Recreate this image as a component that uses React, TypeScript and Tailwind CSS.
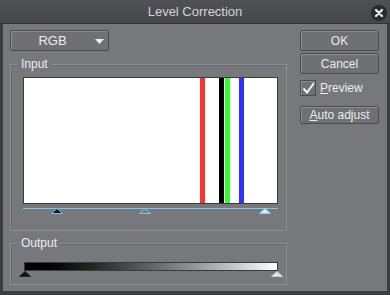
import React from 'react';

const font = { fontFamily: '"Liberation Sans", Arial, sans-serif' };

function Button({ label, u, h = 'h-[21px]' }: { label: string; u?: number; h?: string }) {
  return (
    <button className={`${h} w-[79px] rounded-[2px] border border-[#4a4b4e] bg-[#6f7073] text-[12px] leading-none text-[#ececec] shadow-[inset_1px_1px_0_#8e8f92]`}>
      {u === undefined ? label : (
        <>
          {label.slice(0, u)}
          <span className="underline">{label[u]}</span>
          {label.slice(u + 1)}
        </>
      )}
    </button>
  );
}

function Tri({ fill, stroke, w = 12, h = 6 }: { fill: string; stroke: string; w?: number; h?: number }) {
  return (
    <svg width={w} height={h} viewBox={`0 0 ${w} ${h}`} className="block">
      <polygon points={`${w / 2},0.5 ${w - 0.5},${h - 0.5} 0.5,${h - 0.5}`} fill={fill} stroke={stroke} strokeWidth="1" />
    </svg>
  );
}

function Group({ label, children, className }: { label: string; children: React.ReactNode; className: string }) {
  return (
    <div className={`relative border border-[#8f9093] shadow-[inset_1px_1px_0_#66676a] ${className}`}>
      <span className="absolute -top-[8px] left-[6px] bg-[#77787b] px-[4px] text-[12px] leading-[14px] text-[#ececec]">
        {label}
      </span>
      {children}
    </div>
  );
}

export default function App() {
  const lines = [
    { x: 177, c: 'bg-[#ff3030]' },
    { x: 196, c: 'bg-black' },
    { x: 202, c: 'bg-[#33ff33]' },
    { x: 216, c: 'bg-[#3030ff]' },
  ];
  return (
    <div className="flex h-[295px] w-[390px] flex-col bg-[#3c3d3f]" style={font}>
      <div className="relative flex h-[24px] items-center justify-center border-b border-[#333436] bg-gradient-to-b from-[#505154] to-[#46474a]">
        <span className="text-[13px] text-[#d4d4d4]">Level Correction</span>
        <div className="absolute right-[3px] top-[5px] flex h-[16px] w-[16px] items-center justify-center rounded-full bg-[#2a2a2c]">
          <svg width="10" height="10" viewBox="0 0 10 10">
            <path d="M2 2 L8 8 M8 2 L2 8" stroke="#e8e8e8" strokeWidth="2.4" strokeLinecap="round" />
          </svg>
        </div>
      </div>
      <div className="mx-[3px] mb-[4px] flex flex-1 bg-[#77787b] px-[7px] pt-[6px]">
        <div className="flex w-[277px] flex-col">
          <div className="relative flex h-[21px] w-[99px] items-center justify-center rounded-[2px] border border-[#4a4b4e] bg-[#6f7073] text-[13px] text-[#ececec] shadow-[inset_1px_1px_0_#8e8f92]">
            <span className="-ml-[14px]">RGB</span>
            <svg width="9" height="5" viewBox="0 0 9 5" className="absolute right-[4px] top-[8px]">
              <polygon points="0,0 9,0 4.5,5" fill="#eeeeee" />
            </svg>
          </div>
          <Group label="Input" className="mt-[13px] h-[167px] pl-[12px] pt-[12px]">
            <div className="relative h-[127px] w-[255px] border border-[#3a3a3a] bg-white">
              {lines.map((l) => (
                <div key={l.x} className={`absolute top-0 h-full w-[5px] ${l.c}`} style={{ left: l.x - 1 }} />
              ))}
            </div>
            <div className="mt-[4px] h-[1px] w-[255px] bg-[#7fc6ea]" />
            <div className="relative h-[7px] w-[255px]">
              <div className="absolute left-[28px] -top-[1px]">
                <Tri fill="#111" stroke="#7fc6ea" />
              </div>
              <div className="absolute left-[116px] -top-[1px]">
                <Tri fill="#77787b" stroke="#7fc6ea" />
              </div>
              <div className="absolute left-[236px] -top-[1px]">
                <Tri fill="#d6ecf8" stroke="#8fcdee" />
              </div>
            </div>
          </Group>
          <Group label="Output" className="mt-[12px] h-[42px] pl-[13px] pt-[18px]">
            <div className="h-[9px] w-[254px] border border-[#3a3a3a] bg-gradient-to-r from-black to-white" />
            <div className="-ml-[5px] flex w-[264px] justify-between">
              <Tri fill="#111" stroke="#222" />
              <Tri fill="#e6e6e6" stroke="#cfcfcf" />
            </div>
          </Group>
        </div>
        <div className="ml-[13px] flex flex-col gap-[2px]">
          <Button label="OK" />
          <Button label="Cancel" />
          <label className="mt-[4px] flex h-[16px] items-center gap-[4px] text-[12px] leading-none text-[#ececec]">
            <span className="flex h-[16px] w-[16px] items-center justify-center border border-[#4a4b4e] bg-[#6f7073] shadow-[inset_1px_1px_0_#8e8f92]">
              <svg width="13" height="12" viewBox="0 0 13 12">
                <path d="M1.5 6.5 L5 10.5 L12 1" stroke="#f4f4f4" strokeWidth="2" fill="none" />
              </svg>
            </span>
            <span>
              <span className="underline">P</span>review
            </span>
          </label>
          <div className="mt-[4px]">
            <Button label="Auto adjust" u={0} h="h-[18px]" />
          </div>
        </div>
      </div>
    </div>
  );
}
